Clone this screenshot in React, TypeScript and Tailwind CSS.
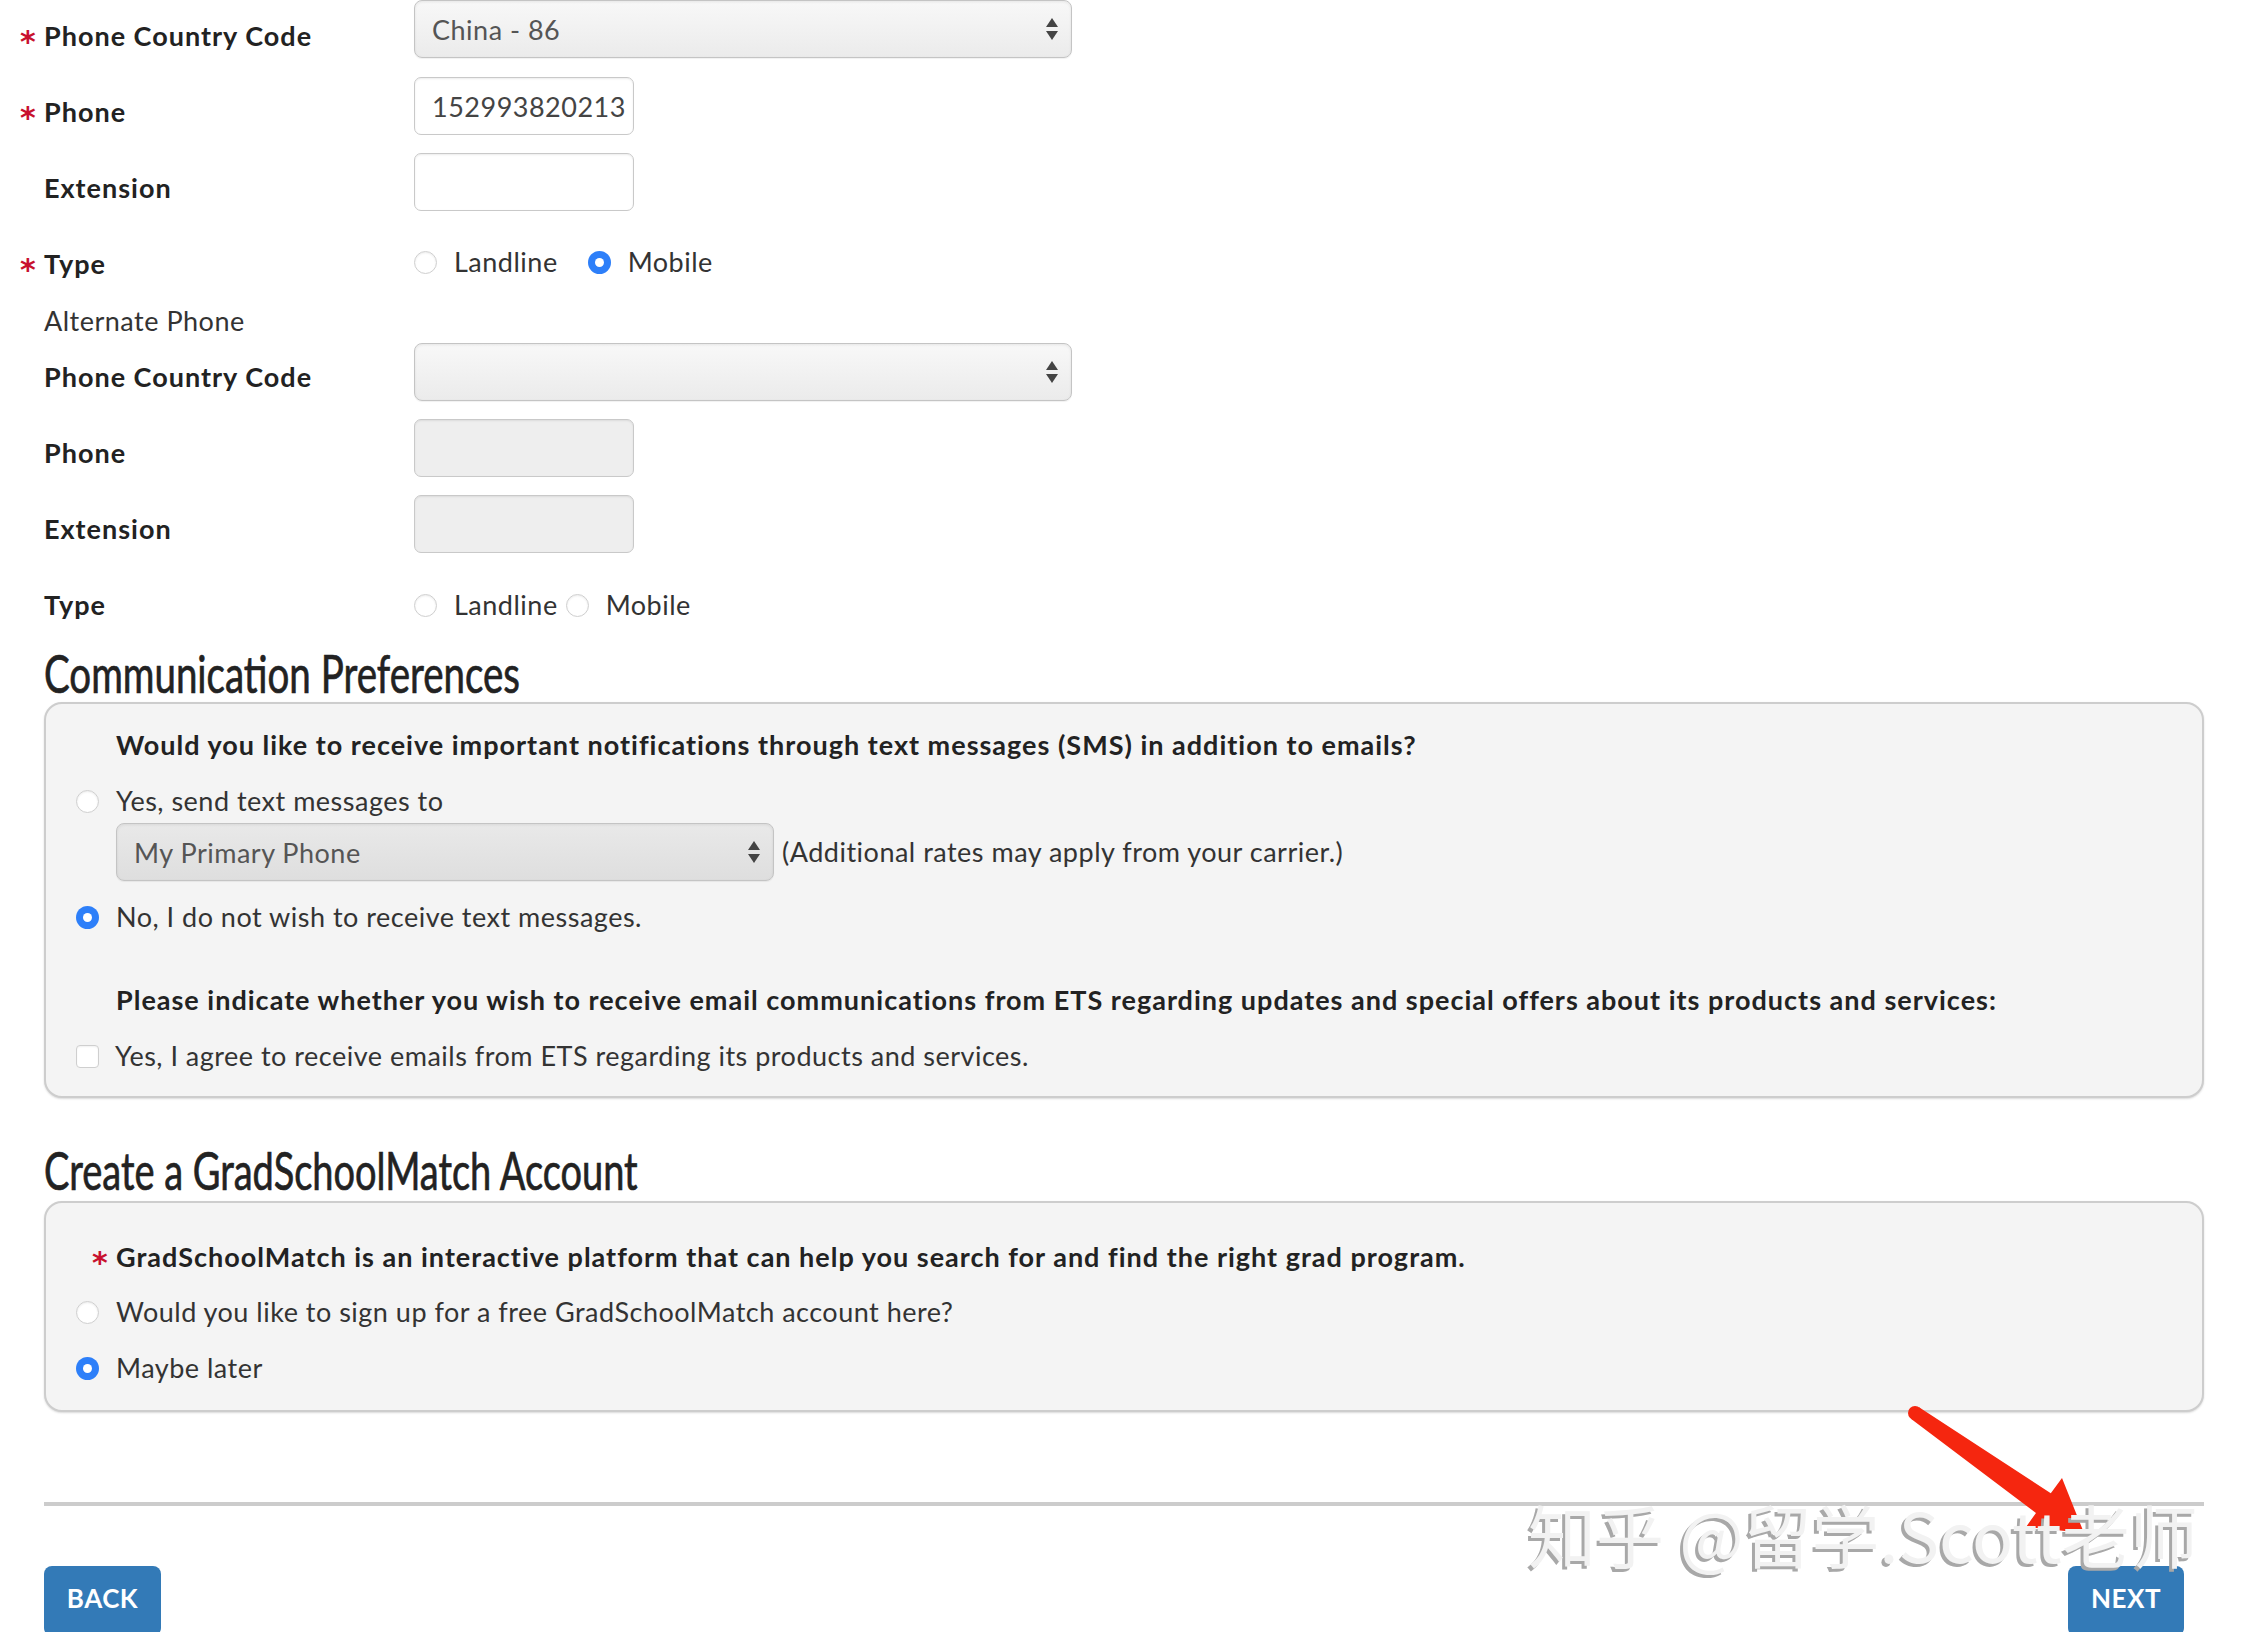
import React from 'react';

const sans = "font-['Lato','Noto_Sans',sans-serif]";

function Radio({ checked }: { checked?: boolean }) {
  if (checked) {
    return (
      <span className="w-[23px] h-[23px] rounded-full bg-[#2d7ff9] flex items-center justify-center shrink-0">
        <span className="w-[9px] h-[9px] rounded-full bg-white" />
      </span>
    );
  }
  return (
    <span className="w-[23px] h-[23px] rounded-full bg-white border border-[#cfcfcf] shadow-[inset_0_1px_2px_rgba(0,0,0,0.08)] shrink-0" />
  );
}

function Star() {
  return (
    <span className="relative top-[6px] text-[#c8102e] font-bold font-['DejaVu_Sans',sans-serif] text-[30px] leading-none">
      *
    </span>
  );
}

function Arrows() {
  return (
    <svg width="14" height="24" viewBox="0 0 14 24" className="shrink-0">
      <path d="M7 1 L13 10 L1 10 Z" fill="#444" />
      <path d="M7 23 L13 14 L1 14 Z" fill="#444" />
    </svg>
  );
}

function Select({ value, width, dim }: { value?: string; width: string; dim?: boolean }) {
  return (
    <div
      className={
        width +
        ' h-[58px] rounded-[8px] border border-[#c4c4c4] flex items-center justify-between pl-[17px] pr-[12px] shadow-[inset_0_1px_3px_rgba(0,0,0,0.08),0_1px_1px_rgba(0,0,0,0.06)] ' +
        (dim ? 'bg-linear-to-b from-[#e9e9e9] to-[#dedede]' : 'bg-linear-to-b from-[#f8f8f8] to-[#ebebeb]')
      }
    >
      <span className="text-[27px] text-[#555] leading-none">{value}</span>
      <Arrows />
    </div>
  );
}

function Input({ value, disabled }: { value?: string; disabled?: boolean }) {
  return (
    <div
      className={
        'w-[220px] h-[58px] rounded-[7px] border border-[#c9c9c9] flex items-center pl-[17px] shadow-[inset_0_1px_2px_rgba(0,0,0,0.08)] ' +
        (disabled ? 'bg-[#eeeeee]' : 'bg-white')
      }
    >
      <span className="text-[27px] text-[#444] leading-none">{value}</span>
    </div>
  );
}

function Row({
  label,
  required,
  top,
  children,
}: {
  label: string;
  required?: boolean;
  top: string;
  children: React.ReactNode;
}) {
  return (
    <div className="flex h-[76px]">
      <div className={'w-[370px] flex leading-[32px] font-bold tracking-[1px] text-[#222] text-[27px] ' + top}>
        <span className="-ml-[24px] w-[24px]">{required ? <Star /> : null}</span>
        <span>{label}</span>
      </div>
      {children}
    </div>
  );
}

function TypeRadios({ mobile, tight }: { mobile?: boolean; tight?: boolean }) {
  return (
    <div className="flex items-center h-[32px] mt-[18px] text-[27px] text-[#333]">
      <Radio />
      <span className="ml-[17px]">Landline</span>
      <span className={tight ? 'ml-[8px] flex' : 'ml-[30px] flex'}>
        <Radio checked={mobile} />
      </span>
      <span className="ml-[17px]">Mobile</span>
    </div>
  );
}

export default function App() {
  return (
    <div className={'relative h-[1632px] overflow-hidden bg-white text-[#333] tracking-[0.5px] ' + sans}>
      <div className="px-[44px]">
        {/* PRIMARY PHONE */}
        <Row label="Phone Country Code" required top="pt-[20px]">
          <Select value="China - 86" width="w-[658px]" />
        </Row>
        <Row label="Phone" required top="pt-[20px]">
          <div className="pt-[1px]">
            <Input value="152993820213" />
          </div>
        </Row>
        <Row label="Extension" top="pt-[20px]">
          <div className="pt-[1px]">
            <Input />
          </div>
        </Row>
        <Row label="Type" required top="pt-[20px]">
          <TypeRadios mobile />
        </Row>

        {/* ALTERNATE PHONE */}
        <div className="h-[39px] leading-[34px] text-[27px] text-[#333]">Alternate Phone</div>
        <Row label="Phone Country Code" top="pt-[18px]">
          <Select width="w-[658px]" />
        </Row>
        <Row label="Phone" top="pt-[18px]">
          <Input disabled />
        </Row>
        <Row label="Extension" top="pt-[18px]">
          <Input disabled />
        </Row>
        <Row label="Type" top="pt-[18px]">
          <TypeRadios tight />
        </Row>

        {/* COMMUNICATION PREFERENCES */}
        <h2 className="h-[52px] text-[52px] leading-none tracking-normal text-[#222] font-normal [-webkit-text-stroke:0.7px_#222]">
          <span className="inline-block origin-left scale-x-[0.74] whitespace-nowrap">Communication Preferences</span>
        </h2>
        <div className="mt-[3px] rounded-[18px] border-2 border-[#cdcdcd] bg-[#f4f4f4] pt-[25px] pb-[24px] pl-[30px] text-[27px] leading-[32px] shadow-[0_1px_2px_rgba(0,0,0,0.15)]">
          <p className="pl-[40px] font-bold tracking-[1px] text-[#222]">
            Would you like to receive important notifications through text messages (SMS) in addition to emails?
          </p>
          <div className="mt-[24px] flex items-center gap-[17px]">
            <Radio />
            <span>Yes, send text messages to</span>
          </div>
          <div className="mt-[6px] pl-[40px] flex items-center gap-[8px]">
            <Select value="My Primary Phone" width="w-[658px]" dim />
            <span>(Additional rates may apply from your carrier.)</span>
          </div>
          <div className="mt-[20px] flex items-center gap-[17px]">
            <Radio checked />
            <span>No, I do not wish to receive text messages.</span>
          </div>
          <p className="mt-[51px] pl-[40px] font-bold tracking-[1px] text-[#222]">
            Please indicate whether you wish to receive email communications from ETS regarding updates and special offers about its products and services:
          </p>
          <div className="mt-[24px] flex items-center gap-[16px]">
            <span className="w-[23px] h-[23px] rounded-[4px] bg-white border border-[#cfcfcf] shadow-[inset_0_1px_2px_rgba(0,0,0,0.06)]" />
            <span>Yes, I agree to receive emails from ETS regarding its products and services.</span>
          </div>
        </div>

        {/* GRADSCHOOLMATCH */}
        <h2 className="mt-[46px] h-[52px] text-[52px] leading-none tracking-normal text-[#222] font-normal [-webkit-text-stroke:0.7px_#222]">
          <span className="inline-block origin-left scale-x-[0.73] whitespace-nowrap">Create a GradSchoolMatch Account</span>
        </h2>
        <div className="mt-[5px] rounded-[18px] border-2 border-[#cdcdcd] bg-[#f4f4f4] pt-[38px] pb-[26px] pl-[30px] text-[27px] leading-[32px] shadow-[0_1px_2px_rgba(0,0,0,0.15)]">
          <p className="flex font-bold tracking-[1px] text-[#222]">
            <span className="ml-[16px] w-[24px]">
              <Star />
            </span>
            <span>GradSchoolMatch is an interactive platform that can help you search for and find the right grad program.</span>
          </p>
          <div className="mt-[23px] flex items-center gap-[17px]">
            <Radio />
            <span>Would you like to sign up for a free GradSchoolMatch account here?</span>
          </div>
          <div className="mt-[24px] flex items-center gap-[17px]">
            <Radio checked />
            <span>Maybe later</span>
          </div>
        </div>

        <div className="mt-[90px] h-[4px] bg-[#cccccc]" />

        <div className="mt-[60px] flex justify-between">
          <button className="w-[117px] h-[70px] rounded-[8px] bg-[#337ab7] text-white font-bold text-[26px] leading-[32px] pb-[6px]">
            BACK
          </button>
          <button className="mr-[20px] w-[116px] h-[70px] rounded-[8px] bg-[#337ab7] text-white font-bold text-[26px] leading-[32px] pb-[6px]">
            NEXT
          </button>
        </div>
      </div>

      {/* RED ARROW ANNOTATION */}
      <svg className="absolute inset-0 pointer-events-none" width="2248" height="1632" viewBox="0 0 2248 1632">
        <circle cx="1915" cy="1413" r="7" fill="#f5260f" />
        <polygon
          points="1919.1,1407.3 2050.8,1493.2 2062,1478 2084,1533 2026,1527 2036,1513 1910.9,1418.7"
          fill="#f5260f"
        />
      </svg>

      {/* WATERMARK */}
      <div className="absolute left-[1528px] top-[1500px] text-[68px] leading-none tracking-normal whitespace-nowrap text-[#f2f2f2] font-['Noto_Sans_CJK_SC',sans-serif] [text-shadow:-3px_3px_0_#a8a8a8] pointer-events-none">
        知乎 @留学.Scott老师
      </div>
    </div>
  );
}
